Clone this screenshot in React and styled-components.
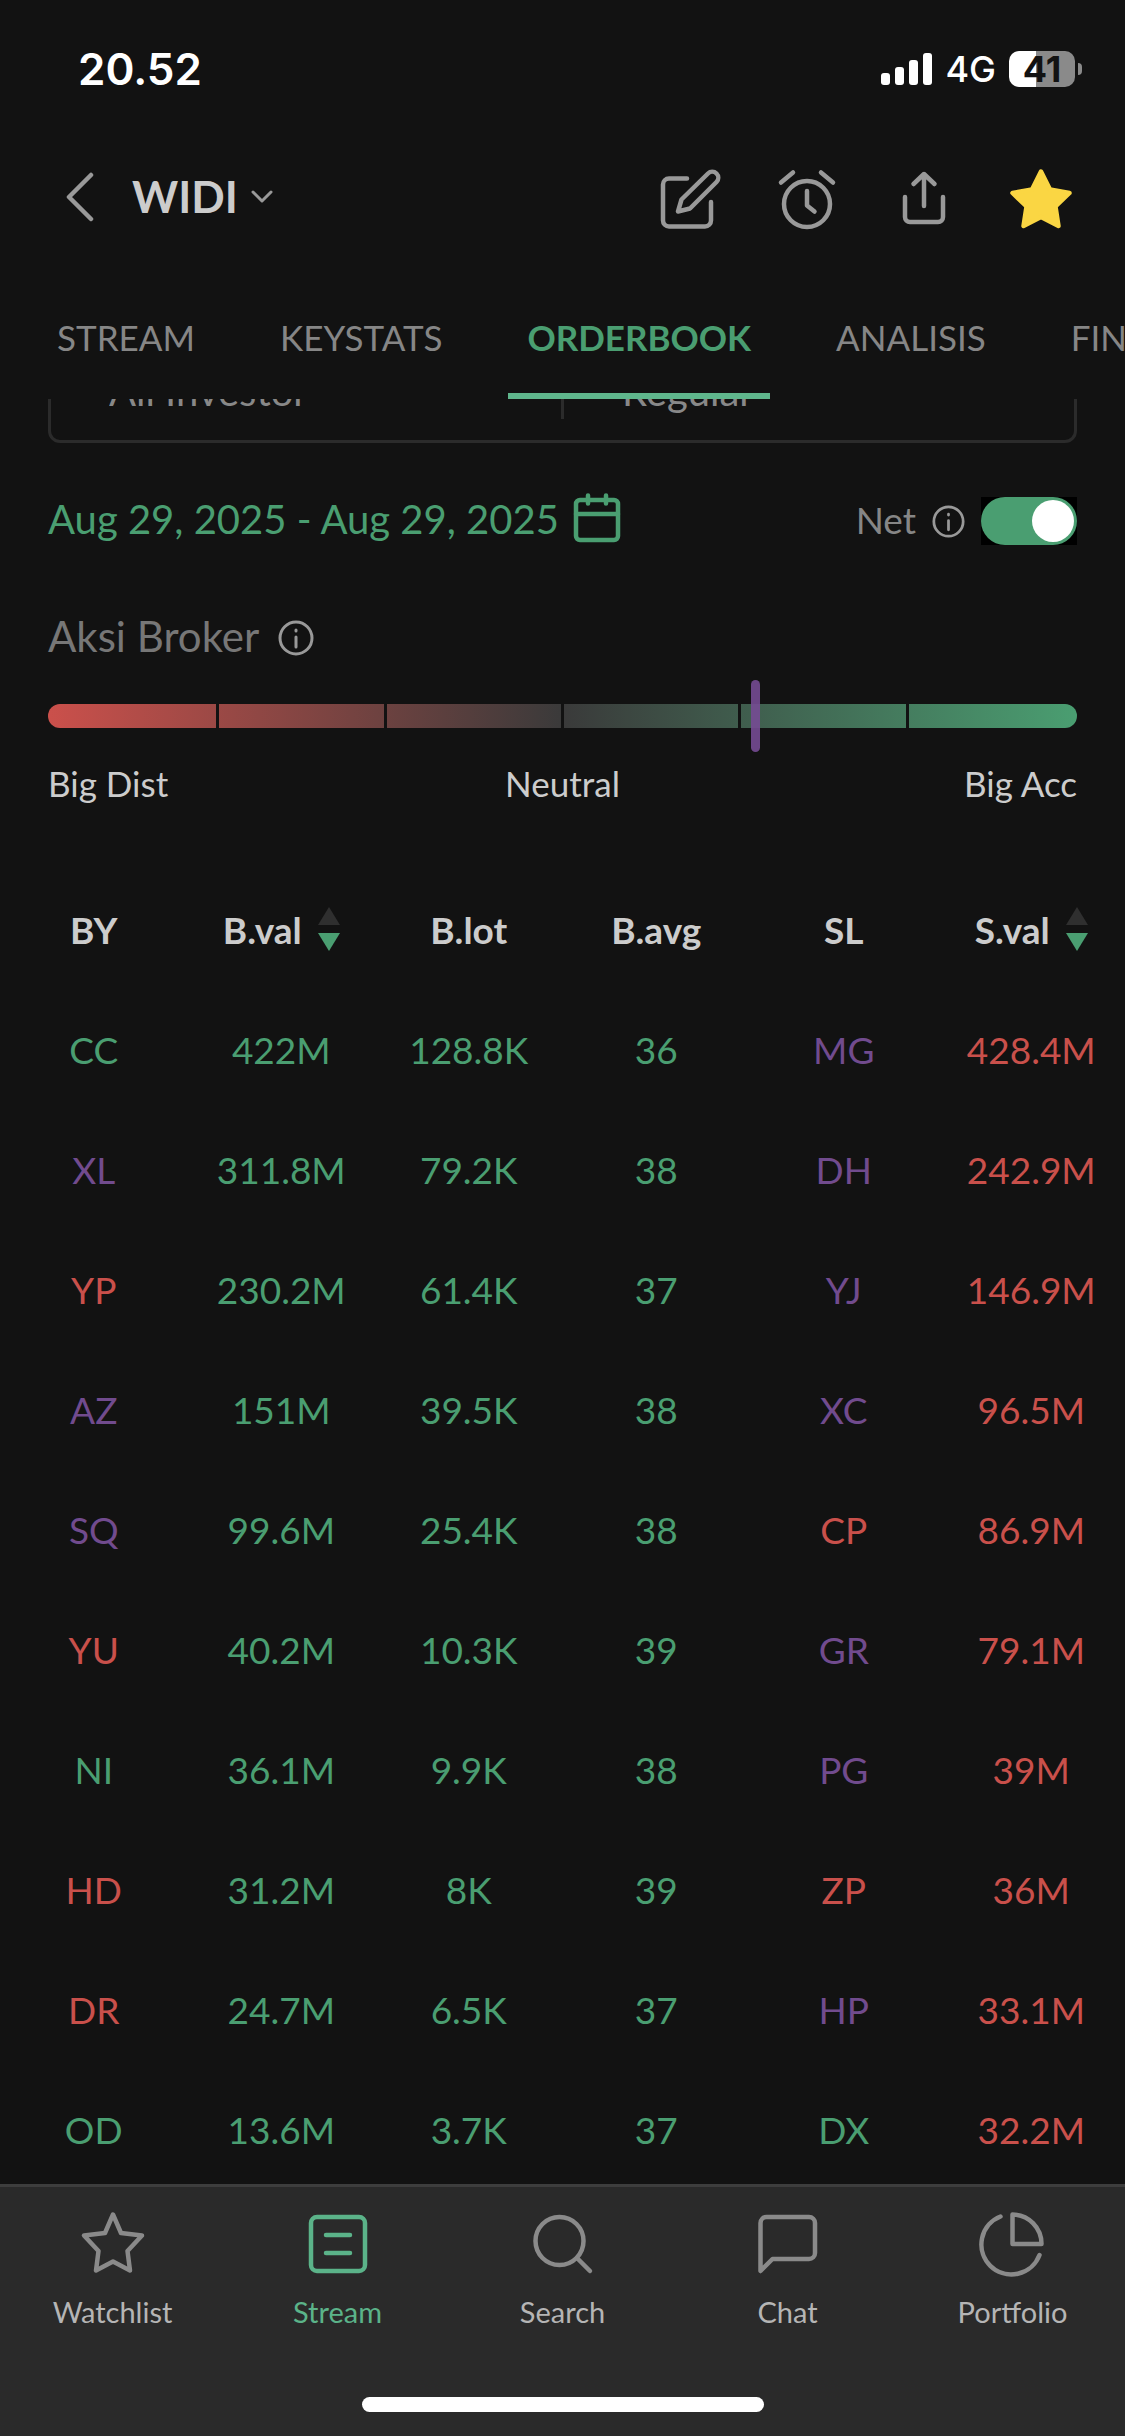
import React, { useState } from 'react';
import styled, { createGlobalStyle } from 'styled-components';

const GREEN = '#4a9e71';
const RED = '#c9504b';
const PURPLE = '#714b8e';

const brokerColors = { g: GREEN, r: RED, p: PURPLE };

const rows = [
	[ 'CC', 'g', '422M', '128.8K', '36', 'MG', 'p', '428.4M' ],
	[ 'XL', 'p', '311.8M', '79.2K', '38', 'DH', 'p', '242.9M' ],
	[ 'YP', 'r', '230.2M', '61.4K', '37', 'YJ', 'p', '146.9M' ],
	[ 'AZ', 'p', '151M', '39.5K', '38', 'XC', 'p', '96.5M' ],
	[ 'SQ', 'p', '99.6M', '25.4K', '38', 'CP', 'r', '86.9M' ],
	[ 'YU', 'r', '40.2M', '10.3K', '39', 'GR', 'p', '79.1M' ],
	[ 'NI', 'g', '36.1M', '9.9K', '38', 'PG', 'p', '39M' ],
	[ 'HD', 'r', '31.2M', '8K', '39', 'ZP', 'r', '36M' ],
	[ 'DR', 'r', '24.7M', '6.5K', '37', 'HP', 'p', '33.1M' ],
	[ 'OD', 'g', '13.6M', '3.7K', '37', 'DX', 'g', '32.2M' ]
];

const tabs = [ 'STREAM', 'KEYSTATS', 'ORDERBOOK', 'ANALISIS', 'FINANCIALS' ];

const notches = [ 168, 165, 174, 174, 165, 168 ];

const Icon = ({ children }) => (
	<IconSvg width="72" height="72" viewBox="0 0 72 72" aria-hidden="true">
		{children}
	</IconSvg>
);

const InfoIcon = ({ size }) => (
	<IconSvg width={size} height={size} viewBox="0 0 36 36" $stroke={3} aria-hidden="true">
		<circle cx="18" cy="18" r="16" />
		<path d="M18 17v10M18 10v1" />
	</IconSvg>
);

const Chevron = () => (
	<IconSvg width="24" height="16" viewBox="0 0 24 16" $stroke={3} aria-hidden="true">
		<path d="M3 4l9 9 9-9" />
	</IconSvg>
);

const SortArrows = () => (
	<svg width="22" height="44" viewBox="0 0 22 44" aria-hidden="true">
		<path d="M11 0l11 18H0z" fill="#2f2f2f" />
		<path d="M11 44l11-18H0z" fill={GREEN} />
	</svg>
);

const navItems = [
	{
		label: 'Watchlist',
		icon: <path d="M36 6.5L44 25l21 2.5L50.5 43 53 62.5 36 53.5 19 62.5 21.5 43 7 27.5 28 25z" />
	},
	{
		label: 'Stream',
		icon: (
			<React.Fragment>
				<rect x="9" y="9" width="54" height="54" rx="6" />
				<path d="M24 27h24M24 45h24" />
			</React.Fragment>
		)
	},
	{
		label: 'Search',
		icon: (
			<React.Fragment>
				<circle cx="32.5" cy="33" r="24" />
				<path d="M50 50l13 13" />
			</React.Fragment>
		)
	},
	{
		label: 'Chat',
		icon: <path d="M8.5 63V15a6 6 0 0 1 6-6H57a6 6 0 0 1 6 6v30a6 6 0 0 1-6 6H20.5z" />
	},
	{
		label: 'Portfolio',
		icon: (
			<React.Fragment>
				<path d="M35.5 36V6.5A29 29.5 0 0 1 64.5 36z" />
				<path d="M23.5 8.5A30 30 0 1 0 62.5 47" />
			</React.Fragment>
		)
	}
];

const App = () => {
	const [ tab, setTab ] = useState('ORDERBOOK');
	const [ page, setPage ] = useState('Stream');
	const [ net, setNet ] = useState(true);
	const action = 68.7;

	return (
		<Screen>
			<GlobalStyle />
			<StatusBar>
				<Time>20.52</Time>
				<StatusRight>
					<svg width="51" height="34" viewBox="0 0 51 34" fill="#fff" aria-hidden="true">
						<rect x="0" y="21" width="9" height="12" rx="3" />
						<rect x="14" y="15" width="9" height="18" rx="3" />
						<rect x="28" y="8" width="9" height="25" rx="3" />
						<rect x="42" y="1" width="9" height="32" rx="3" />
					</svg>
					<Network>4G</Network>
					<BatteryWrap>
						<Battery>41</Battery>
						<BatteryTip />
					</BatteryWrap>
				</StatusRight>
			</StatusBar>

			<Header>
				<IconButton aria-label="Back" $narrow>
					<IconSvg width="30" height="50" viewBox="0 0 30 50" aria-hidden="true">
						<path d="M27 3L5 25l22 22" />
					</IconSvg>
				</IconButton>
				<TickerButton>
					WIDI
					<Chevron />
				</TickerButton>
				<Actions>
					<IconButton aria-label="Write">
						<Icon>
							<path d="M33 15.5H15a6 6 0 0 0-6 6v36a6 6 0 0 0 6 6h36a6 6 0 0 0 6-6V39" />
							<path d="M24 48.5l3.5-12L54 10.5a6 6 0 0 1 8.5 8.5L36 45.5z" />
						</Icon>
					</IconButton>
					<IconButton aria-label="Alarm">
						<Icon>
							<circle cx="36" cy="41" r="23" />
							<path d="M36 28v14.5l7.5 6M10 19.5L22 9.5M62 19.5L50 9.5" />
						</Icon>
					</IconButton>
					<IconButton aria-label="Share">
						<Icon>
							<path d="M36 43V11M25.5 21L36 11l10.5 10" />
							<path d="M17 34v20a5 5 0 0 0 5 5h28a5 5 0 0 0 5-5V34" />
						</Icon>
					</IconButton>
					<IconButton aria-label="Favorite" $color="#fad643">
						<Icon>
							<path
								fill="currentColor"
								d="M36 8.5L45 26.5 64.5 30 50.5 43.5 53.5 63 36 54 18.5 63 21.5 43.5 7.5 30 27 26.5z"
							/>
						</Icon>
					</IconButton>
				</Actions>
			</Header>

			<Tabs>
				{tabs.map((name) => (
					<Tab key={name} $active={tab === name} onClick={() => setTab(name)}>
						{name}
					</Tab>
				))}
			</Tabs>

			<Main>
				<FilterClip>
					<FilterBox>
						<Filter>
							<Select aria-label="Investor" defaultValue="All Investor">
								<option>All Investor</option>
							</Select>
							<Chevron />
						</Filter>
						<Divider />
						<Filter>
							<Select aria-label="Market" defaultValue="Regular">
								<option>Regular</option>
							</Select>
							<Chevron />
						</Filter>
					</FilterBox>
				</FilterClip>

				<DateRow>
					<DateButton>
						Aug 29, 2025 - Aug 29, 2025
						<IconSvg width="48" height="52" viewBox="0 0 48 52" aria-hidden="true">
							<rect x="3" y="7" width="42" height="40" rx="4" />
							<path d="M3 21h42M15 2.5v8M33 2.5v8" />
						</IconSvg>
					</DateButton>
					<NetGroup>
						<NetLabel htmlFor="net">Net</NetLabel>
						<InfoIcon size={33} />
						<SwitchBox>
							<Switch id="net" type="checkbox" checked={net} onChange={(e) => setNet(e.target.checked)} />
						</SwitchBox>
					</NetGroup>
				</DateRow>

				<ActionTitle>
					<span>Aksi Broker</span>
					<InfoIcon size={36} />
				</ActionTitle>
				<Scale>
					{notches.map((size, i) => <Notch key={i} $size={size} />)}
					<Marker style={{ left: `${action}%` }} />
				</Scale>
				<ScaleLabels>
					<span>Big Dist</span>
					<span>Neutral</span>
					<span>Big Acc</span>
				</ScaleLabels>

				<Table>
					<thead>
						<tr>
							<Th>BY</Th>
							<Th>
								<SortButton>
									B.val
									<SortArrows />
								</SortButton>
							</Th>
							<Th>B.lot</Th>
							<Th>B.avg</Th>
							<Th>SL</Th>
							<Th>
								<SortButton>
									S.val
									<SortArrows />
								</SortButton>
							</Th>
						</tr>
					</thead>
					<tbody>
						{rows.map(([ by, byType, bval, blot, bavg, sl, slType, sval ]) => (
							<tr key={by}>
								<Td $color={brokerColors[byType]}>{by}</Td>
								<Td>{bval}</Td>
								<Td>{blot}</Td>
								<Td>{bavg}</Td>
								<Td $color={brokerColors[slType]}>{sl}</Td>
								<Td $color={RED}>{sval}</Td>
							</tr>
						))}
					</tbody>
				</Table>
			</Main>

			<BottomNav>
				<NavList>
					{navItems.map(({ label, icon }) => (
						<NavButton key={label} $active={page === label} onClick={() => setPage(label)}>
							<Icon>{icon}</Icon>
							<span>{label}</span>
						</NavButton>
					))}
				</NavList>
				<HomeIndicator />
			</BottomNav>
		</Screen>
	);
};

const GlobalStyle = createGlobalStyle`
	* {
		box-sizing: border-box;
	}

	body {
		margin: 0;
		background: #121212;
		color: #ccc;
		font-family: Lato, 'Open Sans', sans-serif;
	}

	button, select, input {
		margin: 0;
		padding: 0;
		border: 0;
		background: none;
		color: inherit;
		font: inherit;
	}

	button {
		cursor: pointer;
	}
`;

const IconSvg = styled.svg`
	display: block;
	flex: none;
	fill: none;
	stroke: currentColor;
	stroke-width: ${(props) => props.$stroke || 4.5};
	stroke-linecap: round;
	stroke-linejoin: round;
`;

const Screen = styled.div`
	display: flex;
	flex-direction: column;
	height: 100vh;
	overflow: hidden;
`;

const StatusBar = styled.div`
	flex: none;
	display: flex;
	align-items: center;
	justify-content: space-between;
	height: 138px;
	padding: 0 43px 0 78px;
	color: #fff;
	font-family: Inter, sans-serif;
`;

const Time = styled.span`
	font-size: 44px;
	font-weight: 600;
`;

const StatusRight = styled.div`
	display: flex;
	align-items: center;
	gap: 13px;
`;

const Network = styled.span`
	font-size: 36px;
	font-weight: 500;
`;

const BatteryWrap = styled.div`
	display: flex;
	align-items: center;
	gap: 3px;
`;

const Battery = styled.div`
	width: 66px;
	border-radius: 10px;
	background: linear-gradient(90deg, #fff 41%, #8a8a8a 41%);
	color: #121212;
	font-size: 36px;
	font-weight: 700;
	line-height: 36px;
	text-align: center;
`;

const BatteryTip = styled.div`
	width: 4px;
	height: 12px;
	border-radius: 0 4px 4px 0;
	background: #8a8a8a;
`;

const Header = styled.header`
	flex: none;
	display: flex;
	align-items: center;
	height: 122px;
	padding: 0 48px 0 64px;
	color: #999;
`;

const IconButton = styled.button`
	display: block;
	margin-right: ${(props) => (props.$narrow ? '38px' : 0)};
	padding-bottom: ${(props) => (props.$narrow ? '4px' : 0)};
	color: ${(props) => props.$color || 'inherit'};
`;

const TickerButton = styled.button`
	display: flex;
	align-items: center;
	gap: 12px;
	padding-bottom: 6px;
	font-size: 44px;
	font-weight: 700;
	color: #ccc;

	svg {
		color: #999;
	}
`;

const Actions = styled.div`
	display: flex;
	gap: 45px;
	margin-left: auto;
`;

const Tabs = styled.nav`
	flex: none;
	display: flex;
	gap: 47px;
	height: 139px;
	padding-left: 38px;
	overflow: hidden;
`;

const Tab = styled.button`
	flex: none;
	padding: 20px 19px 0;
	border-bottom: 6px solid ${(props) => (props.$active ? '#5fb68c' : 'transparent')};
	color: ${(props) => (props.$active ? GREEN : '#868686')};
	font-size: 35px;
	font-weight: ${(props) => (props.$active ? 700 : 400)};
`;

const Main = styled.main`
	flex: 1;
	min-height: 0;
	overflow: hidden;
`;

/* the filter is half scrolled under the tabs */
const FilterClip = styled.div`
	display: flex;
	align-items: flex-end;
	height: 44px;
	margin: 0 48px;
	overflow: hidden;
`;

const FilterBox = styled.div`
	flex: 1;
	display: flex;
	align-items: center;
	height: 104px;
	border: 3px solid #2b2b2b;
	border-radius: 12px;
	color: #888;
`;

const Filter = styled.div`
	flex: 1;
	display: flex;
	align-items: center;
	padding: 0 60px 0 58px;
`;

const Select = styled.select`
	flex: 1;
	appearance: none;
	font-size: 40px;
	line-height: 48px;
`;

const Divider = styled.div`
	width: 3px;
	height: 56px;
	background: #2b2b2b;
`;

const DateRow = styled.div`
	display: flex;
	align-items: center;
	justify-content: space-between;
	height: 48px;
	margin: 54px 48px 0;
`;

const DateButton = styled.button`
	display: flex;
	align-items: center;
	gap: 14px;
	padding-bottom: 4px;
	color: ${GREEN};
	font-size: 40px;
`;

const NetGroup = styled.div`
	display: flex;
	align-items: center;
	gap: 16px;
	color: #999;
`;

const NetLabel = styled.label`
	padding-bottom: 4px;
	color: #868686;
	font-size: 37px;
`;

const SwitchBox = styled.div`
	background: #000;
`;

const Switch = styled.input`
	appearance: none;
	display: flex;
	justify-content: ${(props) => (props.checked ? 'flex-end' : 'flex-start')};
	width: 96px;
	height: 48px;
	padding: 3px;
	border-radius: 24px;
	background: ${(props) => (props.checked ? GREEN : '#444')};

	&::before {
		content: '';
		width: 42px;
		height: 42px;
		border-radius: 50%;
		background: #fff;
	}
`;

const ActionTitle = styled.div`
	display: flex;
	align-items: center;
	gap: 19px;
	height: 36px;
	margin: 75px 48px 0;
	color: #777;
	font-size: 42px;

	span {
		padding-bottom: 4px;
	}

	svg {
		color: #999;
	}
`;

const Scale = styled.div`
	position: relative;
	display: flex;
	height: 24px;
	margin: 48px 48px 0;
	border-radius: 12px;
	background: linear-gradient(90deg, #cb504b, #3a3a3a 50%, ${GREEN});
`;

const Notch = styled.div`
	flex: ${(props) => props.$size};

	& + & {
		border-left: 3px solid #121212;
	}
`;

const Marker = styled.div`
	position: absolute;
	top: -24px;
	width: 9px;
	height: 72px;
	margin-left: -4px;
	border-radius: 5px;
	background: #754b94;
	opacity: 0.9;
`;

const ScaleLabels = styled.div`
	display: grid;
	grid-template-columns: repeat(3, 1fr);
	margin: 35px 48px 67px;
	font-size: 35px;
	line-height: 40px;
	text-align: center;

	span:first-child {
		text-align: left;
	}

	span:last-child {
		text-align: right;
	}
`;

const Table = styled.table`
	width: 100%;
	table-layout: fixed;
	border-collapse: collapse;
	font-size: 37px;
	text-align: center;
`;

const Th = styled.th`
	height: 120px;
	padding: 0 0 2px;
`;

const Td = styled.td`
	height: 120px;
	padding: 0 0 2px;
	color: ${(props) => props.$color || GREEN};
`;

const SortButton = styled.button`
	display: inline-flex;
	align-items: center;
	gap: 16px;
	font-weight: 700;
`;

const BottomNav = styled.nav`
	flex: none;
	display: flex;
	flex-direction: column;
	align-items: center;
	justify-content: space-between;
	height: 252px;
	padding: 21px 0 24px;
	border-top: 3px solid #3d3d3d;
	background: #2a2a2a;
`;

const NavList = styled.div`
	display: grid;
	grid-template-columns: repeat(5, 1fr);
	width: 100%;
`;

const NavButton = styled.button`
	display: flex;
	flex-direction: column;
	align-items: center;
	gap: 14px;
	color: ${(props) => (props.$active ? '#5bb389' : '#8a8a8a')};
	font-size: 29px;
	line-height: 36px;

	span {
		color: ${(props) => (props.$active ? 'inherit' : '#b5b5b5')};
	}
`;

const HomeIndicator = styled.div`
	width: 402px;
	height: 15px;
	border-radius: 8px;
	background: #fff;
`;

export default App;
